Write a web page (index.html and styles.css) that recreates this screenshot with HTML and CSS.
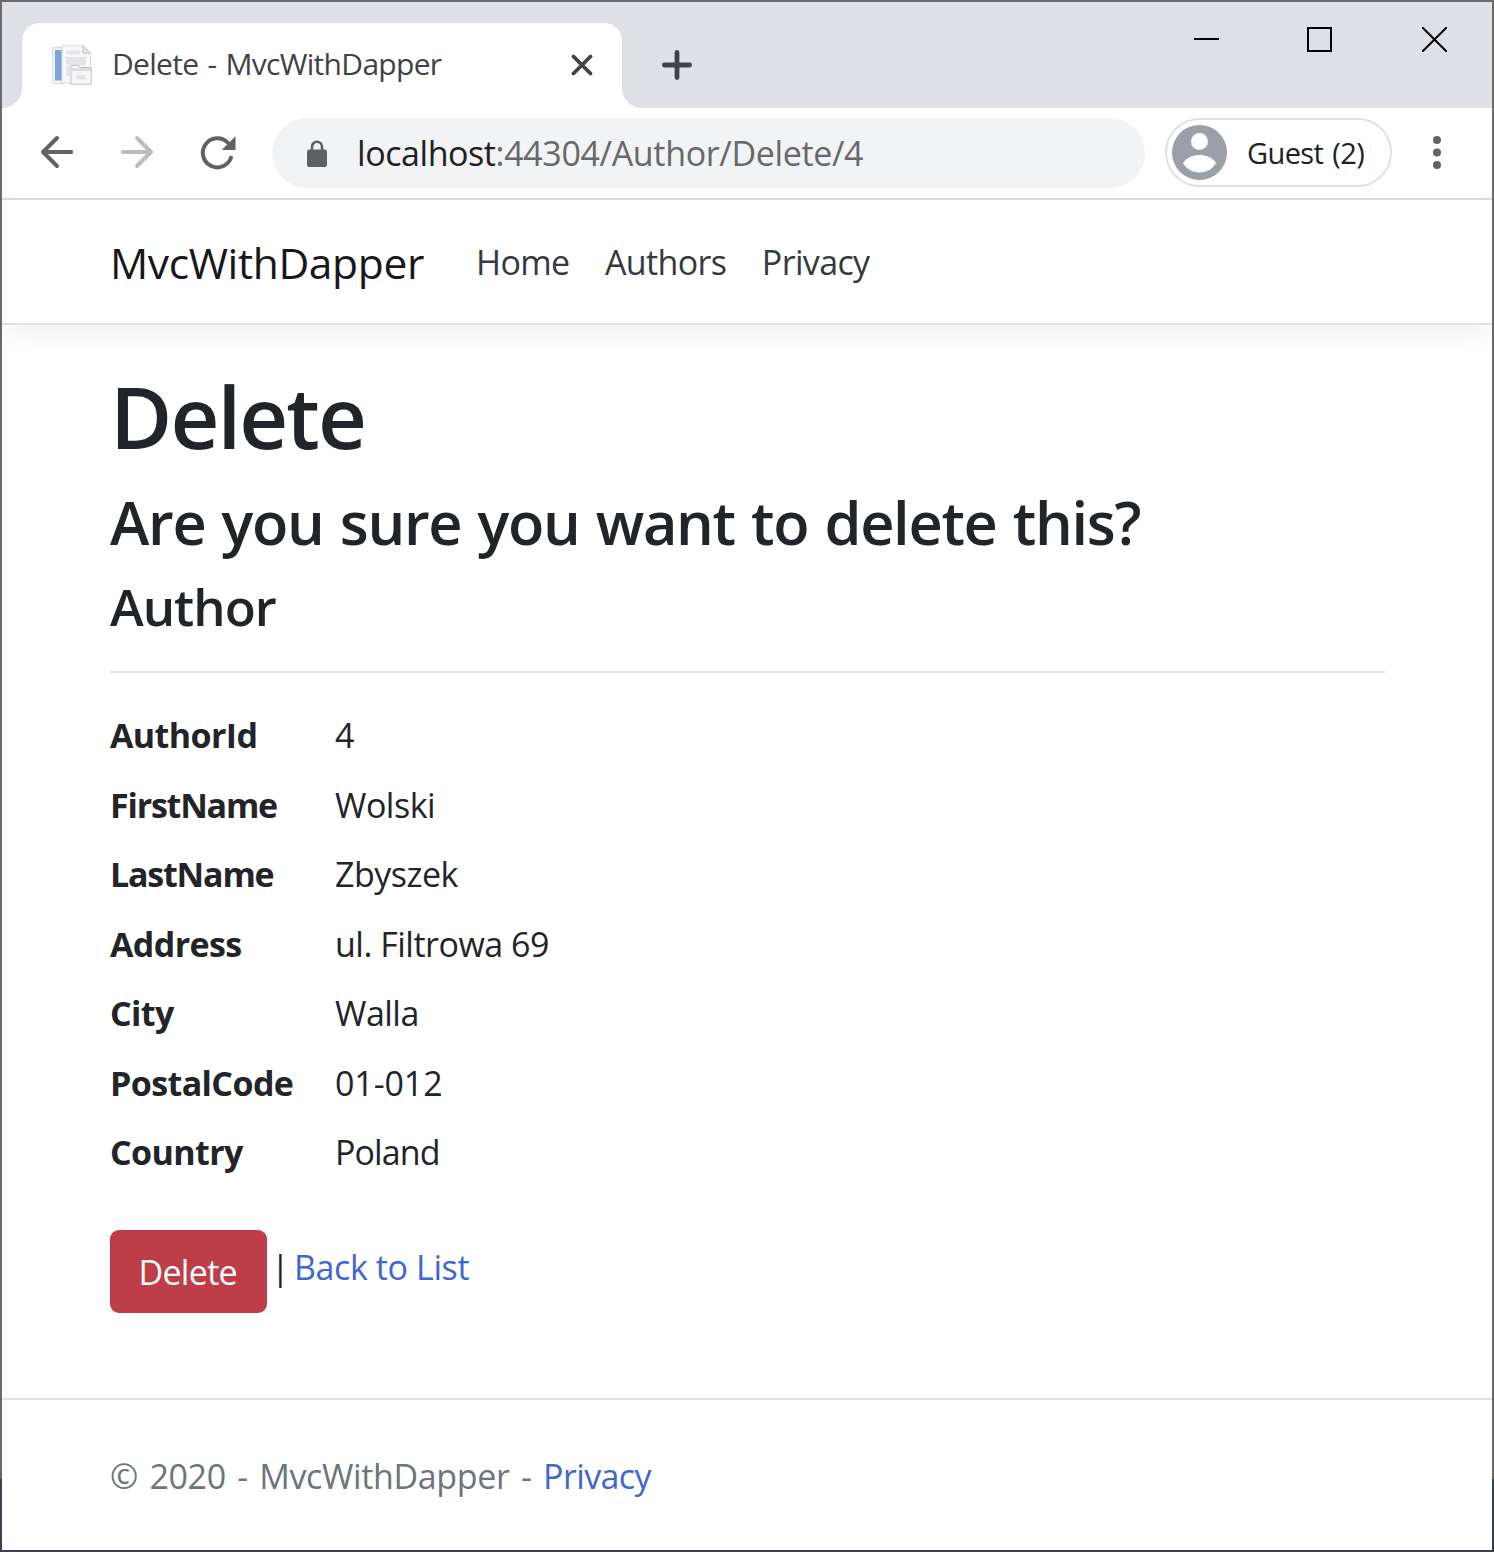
FILE: index.html
```html
<!DOCTYPE html>
<html lang="en">
<head>
<meta charset="utf-8">
<title>Delete - MvcWithDapper</title>
<link rel="stylesheet" href="styles.css">
</head>
<body>
<div class="window">
  <div class="tabstrip">
    <div class="tab-lead"></div>
    <div class="tab">
      <svg class="favicon" width="40" height="40" viewBox="0 0 40 40">
        <path d="M.7 2.500H12V38.500H.7z" fill="#f5f6f7" stroke="#d5d8dc"/>
        <path d="M3 5h8v30.500H3z" fill="#7ba7d8"/>
        <path d="M10 .7h21l7.500 7.500V38H10z" fill="#f8f8f9" stroke="#d9d9dc"/>
        <path d="M31 .7v7.500h7.500z" fill="#e4e4e6" stroke="#c4c4c8"/>
        <path d="M14 5.500h14v4H14zM14 12h20v8H14zM14 21h4v10h-4z" fill="#e4e5ea"/>
        <path d="M19 20.500h8l1 2h11.300v16.800H19z" fill="#f6f6f7" stroke="#c3c3c7"/>
        <path d="M20 23h19v3H20z" fill="#dcdce0"/>
        <path d="M24.500 30h9v4.500h-9z" fill="#e0e1e8"/>
      </svg>
      <span class="tab-title">Delete - MvcWithDapper</span>
      <svg class="tab-close" width="22" height="22" viewBox="0 0 22 22"><path d="M2.500 2.500l17 17M19.500 2.500l-17 17" stroke="#3f4246" stroke-width="3.800" stroke-linecap="round"/></svg>
    </div>
    <div class="strip-rest">
      <svg class="new-tab" width="30" height="30" viewBox="0 0 30 30"><path d="M15 2.400v25.200M2.400 15h25.200" stroke="#3f4246" stroke-width="4.800" stroke-linecap="round"/></svg>
      <div class="controls">
        <svg width="25" height="24" viewBox="0 0 25 24"><path d="M0 14h25" stroke="#000" stroke-width="2"/></svg>
        <svg class="maximize" width="25" height="25" viewBox="0 0 25 25"><path d="M1 1h23v23H1z" fill="none" stroke="#000" stroke-width="2"/></svg>
        <svg width="25" height="25" viewBox="0 0 25 25"><path d="M0 0l25 25M25 0L0 25" stroke="#000" stroke-width="2"/></svg>
      </div>
    </div>
  </div>
  <div class="toolbar">
    <svg class="back" width="34" height="34" viewBox="0 0 34 34"><path d="M31.200 17H3M17 3L3 17 17 31" fill="none" stroke="#5f6368" stroke-width="4" stroke-linecap="round" stroke-linejoin="round"/></svg>
    <svg class="forward" width="34" height="34" viewBox="0 0 34 34"><path d="M2.800 17H31M17 3L31 17 17 31" fill="none" stroke="#babcbe" stroke-width="4" stroke-linecap="round" stroke-linejoin="round"/></svg>
    <svg class="reload" width="36" height="36" viewBox="0 0 36 36"><path d="M31 22.700A14.500 14.500 0 1 1 28 8" fill="none" stroke="#5f6368" stroke-width="4" stroke-linecap="round"/><path d="M35.500 1.200V15H21.700z" fill="#5f6368"/></svg>
    <div class="omnibox">
      <svg class="lock" width="20" height="28" viewBox="0 0 20 28"><path d="M5 11V6.800a5 5 0 0 1 10 0V11" fill="none" stroke="#5f6062" stroke-width="2.600"/><rect y="9.500" width="20" height="17.500" rx="2.200" fill="#5f6062"/></svg>
      <span class="url"><span class="host">localhost</span>:44304/Author/Delete/4</span>
    </div>
    <div class="profile">
      <svg width="56" height="56" viewBox="0 0 56 56"><circle cx="27.500" cy="27.500" r="27.500" fill="#9b9fa6"/><circle cx="27.500" cy="16.500" r="8.500" fill="#fff"/><path d="M11 38C14.500 32.500 21 30 27.500 30s13 2.500 16.500 8C40.500 44 34.500 47.500 27.500 47.500s-13-3.500-16.500-9.500z" fill="#fff"/></svg>
      <span class="profile-name">Guest (2)</span>
    </div>
    <svg class="menu" width="8" height="34" viewBox="0 0 8 34"><g fill="#5f6368"><circle cx="4" cy="4" r="4"/><circle cx="4" cy="16.500" r="4"/><circle cx="4" cy="29" r="4"/></g></svg>
  </div>
  <header class="navbar">
    <a class="brand">MvcWithDapper</a>
    <nav class="nav"><a>Home</a><a>Authors</a><a>Privacy</a></nav>
  </header>
  <main class="content">
    <h1>Delete</h1>
    <h3>Are you sure you want to delete this?</h3>
    <h4>Author</h4>
    <hr>
    <dl class="details">
      <dt>AuthorId</dt><dd class="num">4</dd>
      <dt class="tight">FirstName</dt><dd>Wolski</dd>
      <dt class="tight">LastName</dt><dd>Zbyszek</dd>
      <dt>Address</dt><dd>ul. Filtrowa 69</dd>
      <dt>City</dt><dd>Walla</dd>
      <dt>PostalCode</dt><dd class="num">01-012</dd>
      <dt>Country</dt><dd class="tight">Poland</dd>
    </dl>
    <div class="actions"><button class="btn">Delete</button><span class="bar">|</span><a class="link">Back to List</a></div>
  </main>
  <footer class="footer"><span class="copy">© 2020 - MvcWithDapper - </span><a class="link">Privacy</a></footer>
</div>
</body>
</html>
```
FILE: styles.css
```css
* { box-sizing: border-box; }
body { margin: 0; font-family: "Open Sans", "Noto Sans", sans-serif; color: #212529; }
svg { display: block; flex: none; }
.window {
  width: 1494px; height: 1552px; display: flex; flex-direction: column;
  border: 2px solid; border-image: linear-gradient(#6a6a6a 1479px, #3a4050 1479px) 2;
  background: #fff; overflow: hidden;
}
.tabstrip { display: flex; height: 106px; background: #fff; white-space: nowrap; }
.tab-lead { width: 20px; background: #dfe0e5; border-bottom-right-radius: 20px; }
.tab {
  width: 600px; display: flex; align-items: center; padding: 21px 29px 1px 30px;
  background: linear-gradient(#dfe0e5 50px, #fff 50px);
  position: relative; z-index: 0;
}
.tab::before {
  content: ""; position: absolute; inset: 21px 0 0; z-index: -1;
  background: #fff; border-radius: 18px 18px 0 0;
}
.tab-title { margin-left: 20px; padding-bottom: 2px; flex: 1; font-size: 30px; line-height: 38px; letter-spacing: -.7px; word-spacing: 2px; color: #3f4246; }
.strip-rest { flex: 1; display: flex; justify-content: space-between; background: #dfe0e5; border-bottom-left-radius: 20px; }
.new-tab { margin: 48px 0 0 40px; }
.controls { display: flex; gap: 88px; padding: 25px 45px 0 0; }
.controls svg:first-child { margin-top: -2px; }
.maximize { margin-right: 2px; }
.toolbar { height: 92px; display: flex; align-items: flex-start; border-bottom: 2px solid #dcdde2; padding: 10px 51px 0 38px; }
.back, .forward { margin-top: 17px; }
.forward { margin-left: 46px; }
.reload { margin: 17px 0 0 46px; }
.omnibox { display: flex; margin-left: 36px; width: 873px; height: 70px; border-radius: 35px; background: #f1f3f4; padding-left: 35px; }
.lock { margin-top: 22px; }
.url { margin-left: 30px; font-size: 34px; line-height: 70px; letter-spacing: -.35px; color: #66686b; white-space: nowrap; }
.host { color: #202124; letter-spacing: -.43px; }
.profile { display: flex; margin-left: 20px; width: 227px; height: 69px; border: 2px solid #e1e1e2; border-radius: 35px; padding: 5px; }
.profile-name { margin-left: 19px; font-size: 29px; line-height: 55px; letter-spacing: -.6px; word-spacing: 2px; color: #202124; white-space: nowrap; }
.menu { margin: 18px 0 0 auto; }
.navbar { height: 125px; display: flex; align-items: flex-start; padding: 0 108px; border-bottom: 2px solid #dee2e6; box-shadow: 0 9px 28px rgba(0,0,0,.055); white-space: nowrap; }
.brand { width: 366px; font-size: 42.5px; line-height: 126px; letter-spacing: -.37px; color: #16181b; }
.nav { display: flex; gap: 35.5px; font-size: 34px; line-height: 125px; letter-spacing: -.65px; color: #343a40; }
.content { padding: 36px 107px 0 108px; white-space: nowrap; }
h1, h3, h4 { margin: 0; font-weight: 600; }
h1 { font-size: 85px; line-height: 110px; letter-spacing: -1.9px; }
h3 { margin-top: 1px; font-size: 59.5px; line-height: 100px; letter-spacing: -1.3px; word-spacing: 2px; }
h4 { font-size: 51px; line-height: 68px; letter-spacing: -1px; }
hr { margin: 31px 0 36px; border: 0; border-top: 2px solid #e3e3e4; }
.details { margin: 0; display: grid; grid-template-columns: 225px 1fr; grid-auto-rows: 69.5px; font-size: 34px; line-height: 52px; letter-spacing: -.5px; }
dt { font-weight: 700; letter-spacing: -.6px; }
dt.tight { letter-spacing: -1.2px; }
dd { margin: 0; }
dd.num { letter-spacing: -.1px; }
dd.tight { letter-spacing: -.9px; }
.actions { display: flex; margin-top: 34px; font-size: 34px; }
.btn { width: 157px; height: 83px; border: 0; border-radius: 9px; background: #bd3d48; color: #fff; font: inherit; line-height: 84px; letter-spacing: -.7px; padding: 0 0 0 28.5px; text-align: left; }
.bar { width: 19px; margin: 0 4px; line-height: 75px; }
.link { color: #3f66d1; }
.actions .link { line-height: 75px; letter-spacing: -.4px; }
.footer { margin-top: auto; height: 152px; border-top: 2px solid #dee2e6; padding: 0 108px; font-size: 34px; line-height: 152px; color: #6c757d; white-space: nowrap; }
.copy { letter-spacing: -.36px; word-spacing: 3px; }
.footer .link { letter-spacing: -.6px; }
```
